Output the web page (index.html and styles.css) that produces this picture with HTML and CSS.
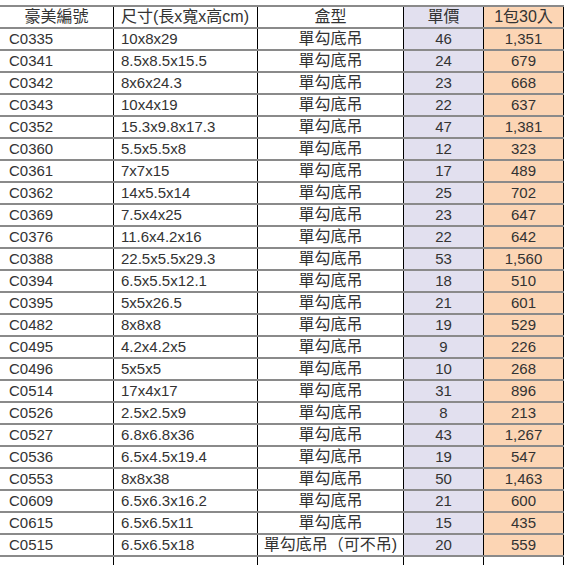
FILE: index.html
```html
<!DOCTYPE html>
<html lang="zh-Hant">
<head>
<meta charset="utf-8">
<title>豪美編號</title>
<link rel="stylesheet" href="styles.css">
</head>
<body>
<div class="sheet">
  <div class="row head">
    <div class="c c1 mid">豪美編號</div>
    <div class="c c2">尺寸(長x寬x高cm)</div>
    <div class="c c3 mid">盒型</div>
    <div class="c c4 mid">單價</div>
    <div class="c c5 mid">1包30入</div>
  </div>
  <div class="row"><div class="c c1">C0335</div><div class="c c2">10x8x29</div><div class="c c3 mid">單勾底吊</div><div class="c c4 mid">46</div><div class="c c5 mid">1,351</div></div>
  <div class="row"><div class="c c1">C0341</div><div class="c c2">8.5x8.5x15.5</div><div class="c c3 mid">單勾底吊</div><div class="c c4 mid">24</div><div class="c c5 mid">679</div></div>
  <div class="row"><div class="c c1">C0342</div><div class="c c2">8x6x24.3</div><div class="c c3 mid">單勾底吊</div><div class="c c4 mid">23</div><div class="c c5 mid">668</div></div>
  <div class="row"><div class="c c1">C0343</div><div class="c c2">10x4x19</div><div class="c c3 mid">單勾底吊</div><div class="c c4 mid">22</div><div class="c c5 mid">637</div></div>
  <div class="row"><div class="c c1">C0352</div><div class="c c2">15.3x9.8x17.3</div><div class="c c3 mid">單勾底吊</div><div class="c c4 mid">47</div><div class="c c5 mid">1,381</div></div>
  <div class="row"><div class="c c1">C0360</div><div class="c c2">5.5x5.5x8</div><div class="c c3 mid">單勾底吊</div><div class="c c4 mid">12</div><div class="c c5 mid">323</div></div>
  <div class="row"><div class="c c1">C0361</div><div class="c c2">7x7x15</div><div class="c c3 mid">單勾底吊</div><div class="c c4 mid">17</div><div class="c c5 mid">489</div></div>
  <div class="row"><div class="c c1">C0362</div><div class="c c2">14x5.5x14</div><div class="c c3 mid">單勾底吊</div><div class="c c4 mid">25</div><div class="c c5 mid">702</div></div>
  <div class="row"><div class="c c1">C0369</div><div class="c c2">7.5x4x25</div><div class="c c3 mid">單勾底吊</div><div class="c c4 mid">23</div><div class="c c5 mid">647</div></div>
  <div class="row"><div class="c c1">C0376</div><div class="c c2">11.6x4.2x16</div><div class="c c3 mid">單勾底吊</div><div class="c c4 mid">22</div><div class="c c5 mid">642</div></div>
  <div class="row"><div class="c c1">C0388</div><div class="c c2">22.5x5.5x29.3</div><div class="c c3 mid">單勾底吊</div><div class="c c4 mid">53</div><div class="c c5 mid">1,560</div></div>
  <div class="row"><div class="c c1">C0394</div><div class="c c2">6.5x5.5x12.1</div><div class="c c3 mid">單勾底吊</div><div class="c c4 mid">18</div><div class="c c5 mid">510</div></div>
  <div class="row"><div class="c c1">C0395</div><div class="c c2">5x5x26.5</div><div class="c c3 mid">單勾底吊</div><div class="c c4 mid">21</div><div class="c c5 mid">601</div></div>
  <div class="row"><div class="c c1">C0482</div><div class="c c2">8x8x8</div><div class="c c3 mid">單勾底吊</div><div class="c c4 mid">19</div><div class="c c5 mid">529</div></div>
  <div class="row"><div class="c c1">C0495</div><div class="c c2">4.2x4.2x5</div><div class="c c3 mid">單勾底吊</div><div class="c c4 mid">9</div><div class="c c5 mid">226</div></div>
  <div class="row"><div class="c c1">C0496</div><div class="c c2">5x5x5</div><div class="c c3 mid">單勾底吊</div><div class="c c4 mid">10</div><div class="c c5 mid">268</div></div>
  <div class="row"><div class="c c1">C0514</div><div class="c c2">17x4x17</div><div class="c c3 mid">單勾底吊</div><div class="c c4 mid">31</div><div class="c c5 mid">896</div></div>
  <div class="row"><div class="c c1">C0526</div><div class="c c2">2.5x2.5x9</div><div class="c c3 mid">單勾底吊</div><div class="c c4 mid">8</div><div class="c c5 mid">213</div></div>
  <div class="row"><div class="c c1">C0527</div><div class="c c2">6.8x6.8x36</div><div class="c c3 mid">單勾底吊</div><div class="c c4 mid">43</div><div class="c c5 mid">1,267</div></div>
  <div class="row"><div class="c c1">C0536</div><div class="c c2">6.5x4.5x19.4</div><div class="c c3 mid">單勾底吊</div><div class="c c4 mid">19</div><div class="c c5 mid">547</div></div>
  <div class="row"><div class="c c1">C0553</div><div class="c c2">8x8x38</div><div class="c c3 mid">單勾底吊</div><div class="c c4 mid">50</div><div class="c c5 mid">1,463</div></div>
  <div class="row"><div class="c c1">C0609</div><div class="c c2">6.5x6.3x16.2</div><div class="c c3 mid">單勾底吊</div><div class="c c4 mid">21</div><div class="c c5 mid">600</div></div>
  <div class="row"><div class="c c1">C0615</div><div class="c c2">6.5x6.5x11</div><div class="c c3 mid">單勾底吊</div><div class="c c4 mid">15</div><div class="c c5 mid">435</div></div>
  <div class="row"><div class="c c1">C0515</div><div class="c c2">6.5x6.5x18</div><div class="c c3 mid">單勾底吊（可不吊)</div><div class="c c4 mid">20</div><div class="c c5 mid">559</div></div>
  <div class="row tail"><div class="c c1"></div><div class="c c2"></div><div class="c c3"></div><div class="c c4 blank"></div><div class="c c5 blank"></div></div>
</div>
</body>
</html>
```

FILE: styles.css
```css
html, body {
  margin: 0;
  padding: 0;
  background: #ffffff;
  overflow: hidden;
}
.sheet {
  margin-top: 5px;
  width: 564px;
  font-family: "Liberation Sans", "Noto Sans CJK TC", sans-serif;
  font-size: 15px;
  color: #333333;
}
.row {
  display: grid;
  grid-template-columns: 114px 144px 146px 80px 80px;
  height: 22px;
  box-sizing: border-box;
  border-top: 2px solid #8a8a8a;
}
.row.tail {
  height: 10px;
}
.c {
  box-sizing: border-box;
  border-right: 1px solid #000;
  display: flex;
  align-items: center;
  white-space: nowrap;
  line-height: 20px;
  height: 20px;
  overflow: visible;
}
.head .c,
.c3 {
  font-size: 16px;
}
.c1 { padding-left: 9px; }
.c2 { padding-left: 7px; }
.mid { justify-content: center; padding-left: 0; }
.c4 { background: #e2e0ef; }
.c5 { background: #fcd5b4; }
.blank { background: #ffffff; }
```
